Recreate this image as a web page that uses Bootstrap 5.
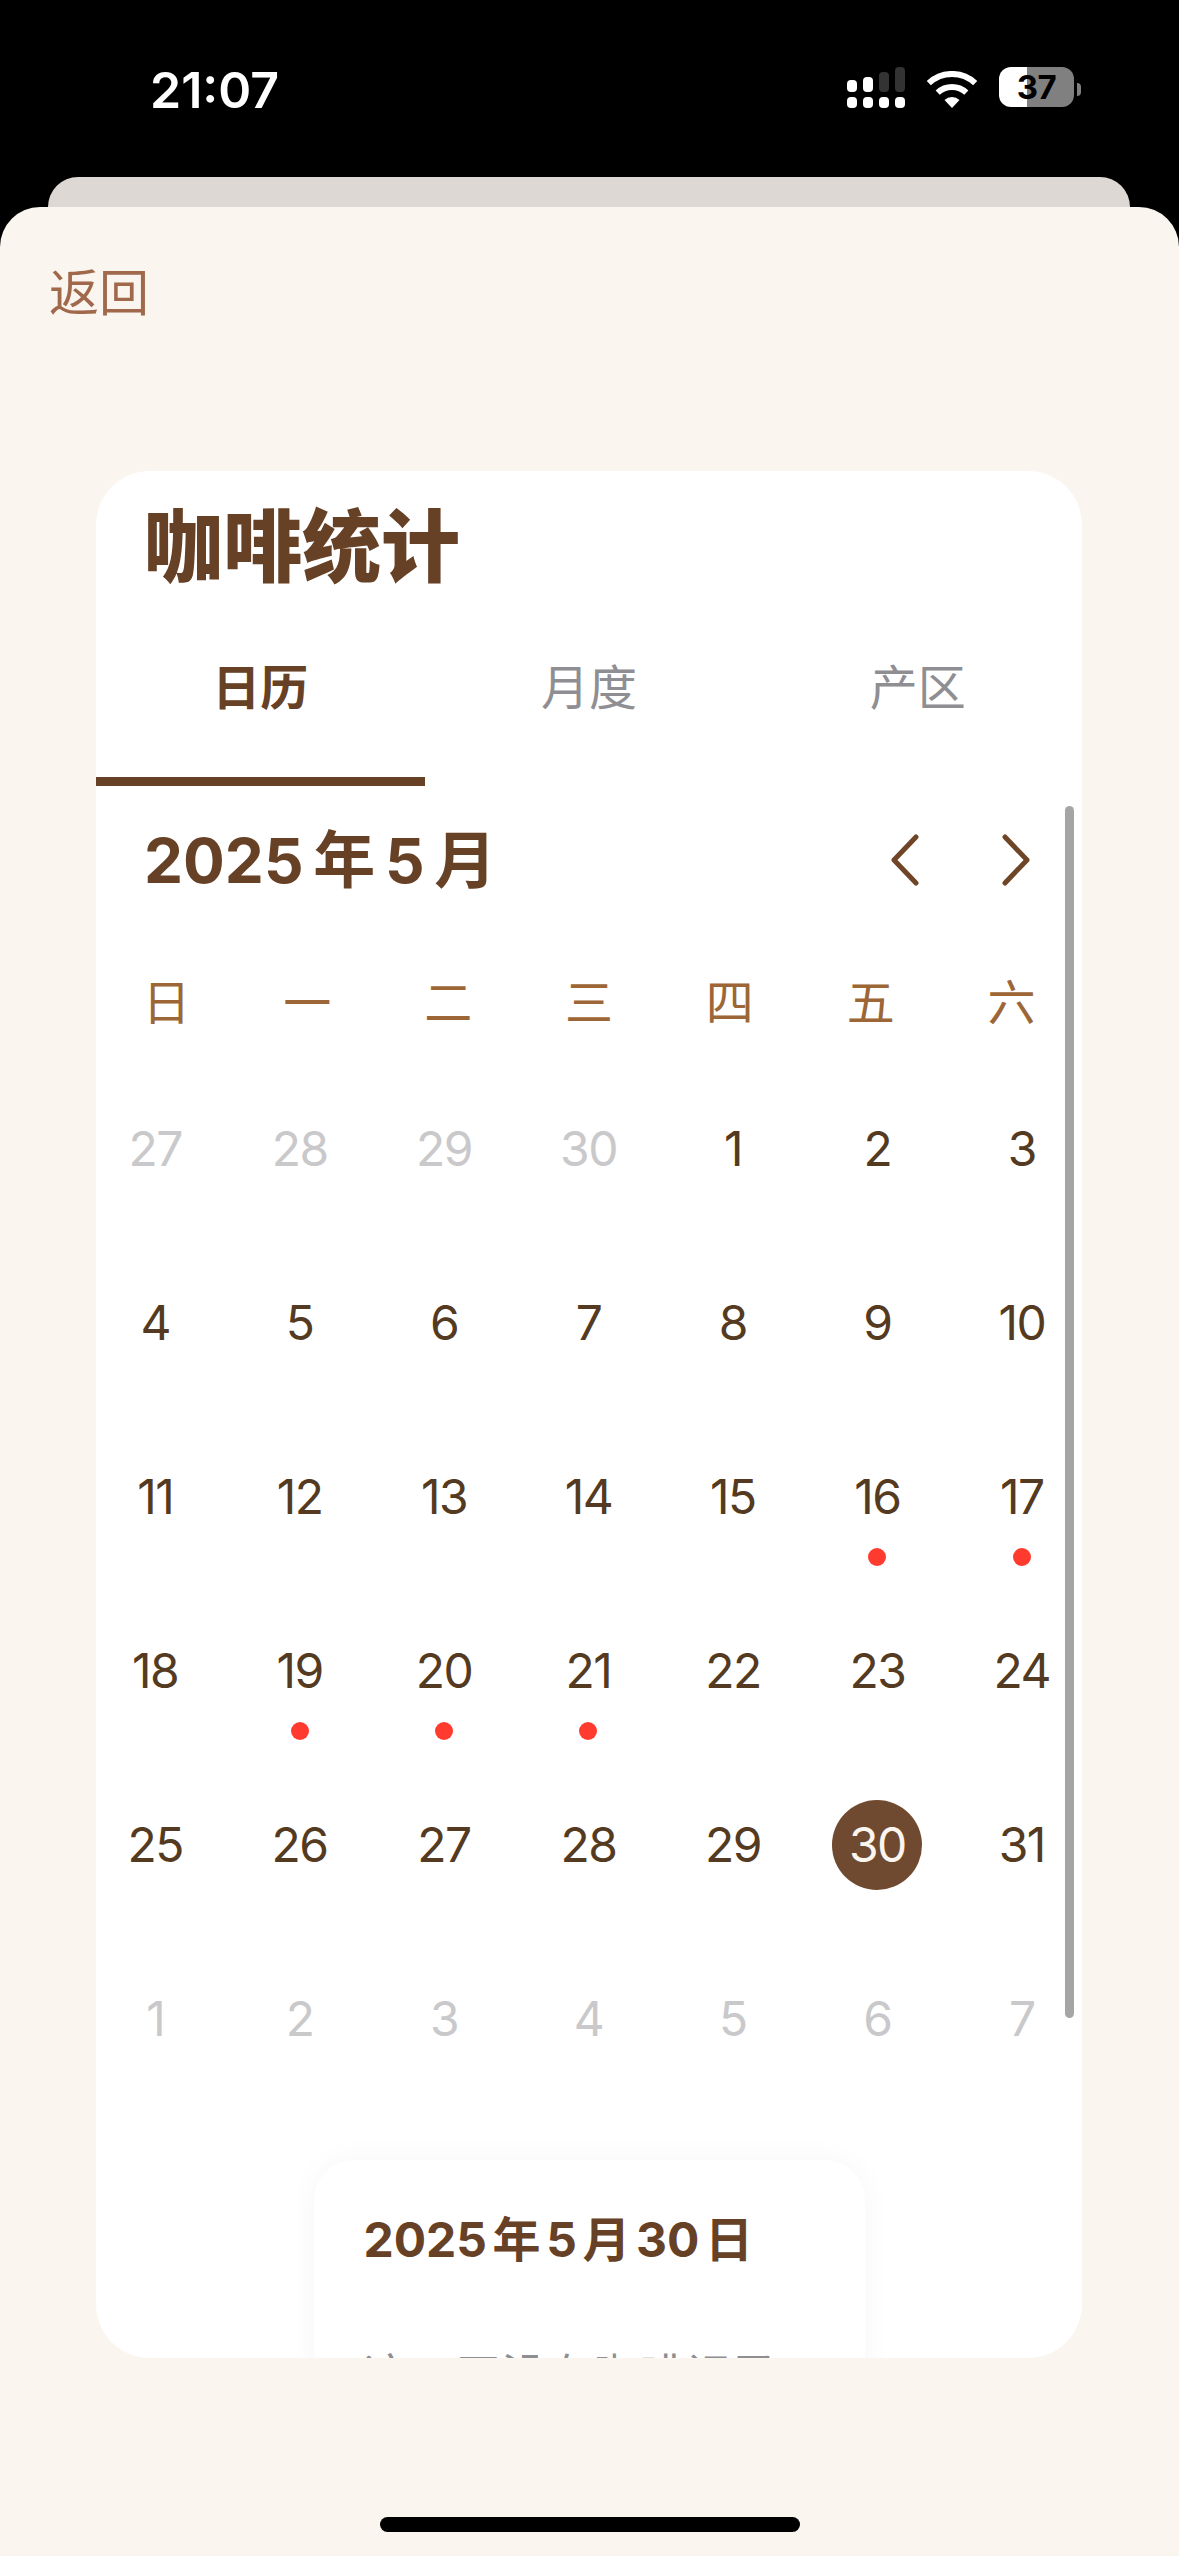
<!DOCTYPE html>
<html lang="zh-CN">
<head>
  <meta charset="UTF-8" />
  <meta name="viewport" content="width=device-width, initial-scale=1" />
  <title>咖啡统计</title>
  <link href="https://cdn.jsdelivr.net/npm/bootstrap@5.3.3/dist/css/bootstrap.min.css" rel="stylesheet" />
  <style>
    html, body {
      height: 2556px;
      margin: 0;
      overflow: hidden;
      background: #000;
      font-family: Inter, "Noto Sans CJK SC", sans-serif;
    }

    /* status bar */
    .phone-status {
      height: 177px;
      color: #fff;
      padding: 62px 98px 0 150px;
    }
    .phone-time {
      font-size: 50px;
      font-weight: 600;
      line-height: 50px;
      margin-top: 3px;
    }
    .phone-icons { gap: 22px; margin-top: 5px; }
    .phone-batt {
      width: 75px;
      height: 40px;
      border-radius: 12px;
      background: linear-gradient(90deg, #fff 0 28px, #808080 28px);
      color: #000;
      font-size: 33px;
      font-weight: 700;
      line-height: 40px;
      letter-spacing: -.5px;
    }
    .phone-cap {
      width: 4px;
      height: 13px;
      background: #808080;
      border-radius: 0 5px 5px 0;
      margin-left: -19px;
    }

    /* stacked sheets */
    .sheet-back {
      height: 30px;
      margin: 0 49px 0 48px;
      background: #ddd8d3;
      border-radius: 32px 32px 0 0;
    }
    .sheet-front {
      height: 2349px;
      background: #faf5ef;
      border-radius: 40px 40px 0 0;
    }
    .back-link {
      color: #a0694b;
      font-size: 50px;
      line-height: 60px;
      padding: 56px 0 0 49px;
      text-decoration: none;
      display: block;
    }

    /* stats card */
    .stats-card {
      display: block;
      height: 1887px;
      margin: 148px 97px 0 96px;
      background: #fff;
      border: 0;
      border-radius: 54px;
      overflow: hidden;
    }
    .stats-title {
      color: #674126;
      font-size: 79px;
      font-weight: 900;
      line-height: 90px;
      padding: 31px 0 0 48px;
      margin: 0;
    }
    .stats-tabs .nav-link {
      height: 194px;
      padding: 3px 0 0;
      color: #8e8e93;
      font-size: 48px;
      line-height: 185px;
      border-bottom: 9px solid transparent;
    }
    .stats-tabs .nav-link.active {
      color: #674126;
      font-weight: 600;
      border-bottom-color: #674126;
    }
    .stats-scroll {
      position: absolute;
      top: 335px;
      right: 8px;
      width: 9px;
      height: 1212px;
      background: #a5a5a5;
      border-radius: 5px;
    }

    /* calendar */
    .cal-head {
      height: 148px;
      padding: 0 52px 0 48px;
      color: #674126;
    }
    .cal-month {
      font-size: 62px;
      font-weight: 700;
      word-spacing: -.08em;
    }
    .cal-arrows { gap: 83px; }
    .cal-week {
      display: grid;
      grid-template-columns: repeat(7, 1fr);
      margin-top: 39px;
      color: #9c6636;
      font-size: 48px;
      line-height: 60px;
      text-align: center;
    }
    .cal-days {
      display: grid;
      grid-template-columns: repeat(7, 1fr);
      margin: 71px -12px 0 -13px;
      color: #543a20;
      font-size: 48px;
    }
    .cal-cell { height: 174px; }
    .cal-num {
      width: 90px;
      height: 90px;
      border-radius: 50%;
      letter-spacing: -1.5px;
    }
    .cal-cell.is-other .cal-num { color: #c9c9cb; }
    .cal-cell.is-today .cal-num { background: #6f4a30; color: #faf5ef; }
    .cal-dot {
      width: 18px;
      height: 18px;
      margin-top: 6px;
      background: #ff3b30;
      border-radius: 50%;
    }

    /* selected day */
    .day-card {
      width: 551px;
      margin: 12px auto 0;
      padding: 50px;
      background: #fff;
      border-radius: 40px;
      box-shadow: 0 0 30px rgba(0, 0, 0, .04);
    }
    .day-title {
      color: #674126;
      font-size: 48px;
      font-weight: 700;
      line-height: 60px;
      word-spacing: -.12em;
      white-space: nowrap;
    }
    .day-text {
      margin-top: 75px;
      color: #8e8e93;
      font-size: 46px;
      line-height: 60px;
      white-space: nowrap;
    }

    .home-bar {
      width: 420px;
      height: 15px;
      margin-bottom: 24px;
      background: #000;
      border-radius: 8px;
    }
  </style>
</head>

<body>
  <div class="phone-status d-flex justify-content-between align-items-start">
    <div class="phone-time">21:07</div>
    <div class="phone-icons d-flex align-items-start">
      <svg width="58" height="41" viewBox="0 0 58 41" fill="#fff">
        <rect x="0" y="13" width="10" height="12" rx="4" />
        <rect x="16" y="10" width="10" height="15" rx="4" />
        <rect x="32" y="5" width="10" height="20" rx="4" fill="#333" />
        <rect x="48" y="0" width="10" height="25" rx="4" fill="#333" />
        <rect x="0" y="30" width="10" height="11" rx="4" />
        <rect x="16" y="30" width="10" height="11" rx="4" />
        <rect x="32" y="30" width="10" height="11" rx="4" />
        <rect x="48" y="30" width="10" height="11" rx="4" />
      </svg>
      <svg width="50" height="37" viewBox="0 0 50 37" class="mt-1">
        <path d="M1.8 12.1A34 34 0 0 1 48.2 12.1M10.7 21.6A21 21 0 0 1 39.3 21.6" fill="none" stroke="#fff" stroke-width="6" />
        <path d="M25 37L17.5 29A11 11 0 0 1 32.5 29Z" fill="#fff" />
      </svg>
      <div class="phone-batt text-center">37</div>
      <div class="phone-cap mt-3"></div>
    </div>
  </div>

  <div class="sheet-back"></div>
  <div class="sheet-front d-flex flex-column">
    <a class="back-link" href="#">返回</a>

    <div class="card stats-card">
      <h1 class="stats-title">咖啡统计</h1>
      <ul class="nav nav-fill stats-tabs">
        <li class="nav-item"><a class="nav-link active" href="#">日历</a></li>
        <li class="nav-item"><a class="nav-link" href="#">月度</a></li>
        <li class="nav-item"><a class="nav-link" href="#">产区</a></li>
      </ul>
      <div class="stats-scroll"></div>

      <div class="cal-head d-flex justify-content-between align-items-center">
        <div class="cal-month">2025 年 5 月</div>
        <div class="cal-arrows d-flex">
          <svg width="28" height="52" viewBox="0 0 28 52" fill="none" stroke="#6e4526" stroke-width="5" stroke-linecap="round" stroke-linejoin="round"><path d="M25 3L3 26L25 49" /></svg>
          <svg width="28" height="52" viewBox="0 0 28 52" fill="none" stroke="#6e4526" stroke-width="5" stroke-linecap="round" stroke-linejoin="round"><path d="M3 3L25 26L3 49" /></svg>
        </div>
      </div>

      <div class="cal-week">
        <div>日</div><div>一</div><div>二</div><div>三</div><div>四</div><div>五</div><div>六</div>
      </div>

      <div class="cal-days" id="calDays"></div>

      <div class="day-card">
        <div class="day-title">2025 年 5 月 30 日</div>
        <div class="day-text">这一天没有咖啡记录</div>
      </div>
    </div>

    <div class="home-bar align-self-center mt-auto"></div>
  </div>

  <script>
    // April tail, May, June head
    const days = [27, 28, 29, 30];
    for (let d = 1; d <= 31; d++) days.push(d);
    for (let d = 1; d <= 7; d++) days.push(d);
    const marked = [16, 17, 19, 20, 21];

    document.getElementById('calDays').innerHTML = days.map((d, i) => {
      const other = i < 4 || i > 34;
      let cls = 'cal-cell d-flex flex-column align-items-center';
      if (other) cls += ' is-other';
      if (!other && d === 30) cls += ' is-today';
      const dot = !other && marked.includes(d) ? '<div class="cal-dot"></div>' : '';
      return `<div class="${cls}"><div class="cal-num d-flex align-items-center justify-content-center">${d}</div>${dot}</div>`;
    }).join('');
  </script>
  <script src="https://cdn.jsdelivr.net/npm/bootstrap@5.3.3/dist/js/bootstrap.bundle.min.js"></script>
</body>
</html>
